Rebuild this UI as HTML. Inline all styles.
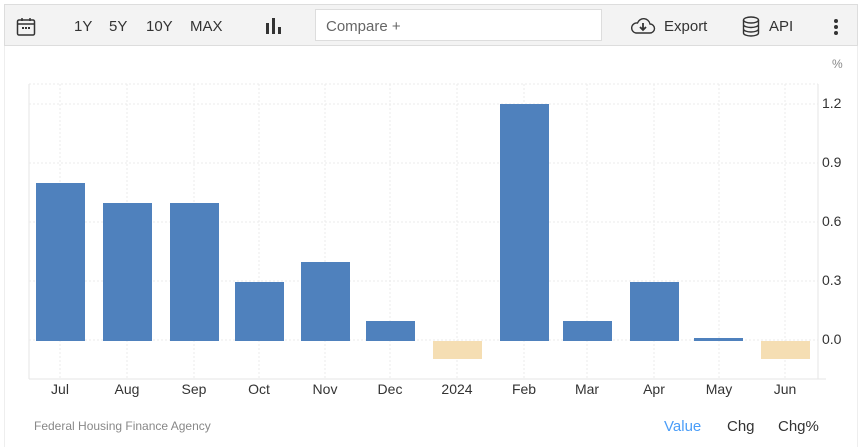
<!DOCTYPE html>
<html><head><meta charset="utf-8"><style>
body{margin:0;width:861px;height:447px;background:#fff;font-family:"Liberation Sans",sans-serif;position:relative;overflow:hidden}
.tb{position:absolute;left:4px;top:4px;width:852px;height:40px;background:#f3f3f3;border:1px solid #ddd}
.t{position:absolute;font-size:15px;color:#333;top:18px}
.cmp{position:absolute;left:315px;top:9px;width:287px;height:32px;background:#fff;border:1px solid #ddd;box-sizing:border-box;font-size:15px;color:#666;padding:8px 10px}
.panel{position:absolute;left:4px;top:46px;width:852px;height:401px;border-left:1px solid #eee;border-right:1px solid #eee}
</style></head><body>
<div class="tb"></div>
<svg style="position:absolute;left:16px;top:17px" width="20" height="20" viewBox="0 0 20 20" fill="none" stroke="#333" stroke-width="1.5"><rect x="1.5" y="3" width="17" height="15" rx="1.5"/><line x1="1.5" y1="7" x2="18.5" y2="7"/><line x1="6" y1="1" x2="6" y2="4"/><line x1="14" y1="1" x2="14" y2="4"/><g fill="#333" stroke="none"><rect x="6" y="10" width="2" height="2"/><rect x="9" y="10" width="2" height="2"/><rect x="12" y="10" width="2" height="2"/></g></svg>
<div class="t" style="left:74px">1Y</div><div class="t" style="left:109px">5Y</div><div class="t" style="left:146px">10Y</div><div class="t" style="left:190px">MAX</div>
<svg style="position:absolute;left:266px;top:18px" width="16" height="16"><rect x="0" y="5" width="3" height="11" fill="#333"/><rect x="6" y="0" width="3" height="16" fill="#333"/><rect x="12" y="9" width="3" height="7" fill="#333"/></svg>
<div class="cmp">Compare +</div>
<svg style="position:absolute;left:630px;top:16px" width="26" height="20" viewBox="0 0 26 20" fill="none" stroke="#333" stroke-width="1.4"><path d="M6 17H20a4.5 4.5 0 0 0 0-9a6.5 6.5 0 0 0-12.5-1A5 5 0 0 0 6 17z"/><path d="M13 7v6M10 11l3 3 3-3" stroke-width="1.8"/></svg>
<div class="t" style="left:664px">Export</div>
<svg style="position:absolute;left:742px;top:16px" width="18" height="21" viewBox="0 0 18 21" fill="none" stroke="#333" stroke-width="1.4"><ellipse cx="9" cy="4" rx="7.5" ry="3"/><path d="M1.5 4v13c0 1.7 3.4 3 7.5 3s7.5-1.3 7.5-3V4M1.5 8.5c0 1.7 3.4 3 7.5 3s7.5-1.3 7.5-3M1.5 13c0 1.7 3.4 3 7.5 3s7.5-1.3 7.5-3"/></svg>
<div class="t" style="left:769px">API</div>
<svg style="position:absolute;left:833px;top:18px" width="6" height="18"><circle cx="3" cy="3" r="2" fill="#333"/><circle cx="3" cy="9" r="2" fill="#333"/><circle cx="3" cy="15" r="2" fill="#333"/></svg>
<div class="panel"></div>
<svg style="position:absolute;left:0;top:0" width="861" height="447" font-family="Liberation Sans,sans-serif">
<g stroke="#ebebeb" stroke-dasharray="2,2">
<line x1="29" y1="84" x2="818" y2="84"/><line x1="29" y1="104" x2="818" y2="104"/><line x1="29" y1="163" x2="818" y2="163"/><line x1="29" y1="222" x2="818" y2="222"/><line x1="29" y1="281" x2="818" y2="281"/><line x1="29" y1="340" x2="818" y2="340"/>
<line x1="60" y1="84" x2="60" y2="379"/><line x1="127" y1="84" x2="127" y2="379"/><line x1="194" y1="84" x2="194" y2="379"/><line x1="259" y1="84" x2="259" y2="379"/><line x1="325" y1="84" x2="325" y2="379"/><line x1="390" y1="84" x2="390" y2="379"/><line x1="457" y1="84" x2="457" y2="379"/><line x1="524" y1="84" x2="524" y2="379"/><line x1="587" y1="84" x2="587" y2="379"/><line x1="654" y1="84" x2="654" y2="379"/><line x1="719" y1="84" x2="719" y2="379"/><line x1="785" y1="84" x2="785" y2="379"/>
</g>
<g stroke="#e6e6e6"><line x1="29" y1="84" x2="29" y2="379"/><line x1="818" y1="84" x2="818" y2="379"/><line x1="29" y1="379" x2="826" y2="379"/></g>
<g fill="#4f81bd">
<rect x="36" y="183" width="49" height="158"/><rect x="103" y="203" width="49" height="138"/><rect x="170" y="203" width="49" height="138"/><rect x="235" y="282" width="49" height="59"/><rect x="301" y="262" width="49" height="79"/><rect x="366" y="321" width="49" height="20"/><rect x="500" y="104" width="49" height="237"/><rect x="563" y="321" width="49" height="20"/><rect x="630" y="282" width="49" height="59"/><rect x="694" y="338" width="49" height="3"/>
</g>
<g fill="#f5deb3"><rect x="433" y="341" width="49" height="18"/><rect x="761" y="341" width="49" height="18"/></g>
<g fill="#333" font-size="14" text-anchor="middle">
<text x="60" y="394">Jul</text><text x="127" y="394">Aug</text><text x="194" y="394">Sep</text><text x="259" y="394">Oct</text><text x="325" y="394">Nov</text><text x="390" y="394">Dec</text><text x="457" y="394">2024</text><text x="524" y="394">Feb</text><text x="587" y="394">Mar</text><text x="654" y="394">Apr</text><text x="719" y="394">May</text><text x="785" y="394">Jun</text>
</g>
<g fill="#333" font-size="14"><text x="822" y="108">1.2</text><text x="822" y="167">0.9</text><text x="822" y="226">0.6</text><text x="822" y="285">0.3</text><text x="822" y="344">0.0</text></g>
<text x="832" y="68" fill="#888" font-size="12">%</text>
<text x="34" y="430" fill="#888" font-size="12">Federal Housing Finance Agency</text>
<text x="664" y="431" fill="#4a9df8" font-size="15">Value</text>
<text x="727" y="431" fill="#333" font-size="15">Chg</text>
<text x="778" y="431" fill="#333" font-size="15">Chg%</text>
</svg>
</body></html>
